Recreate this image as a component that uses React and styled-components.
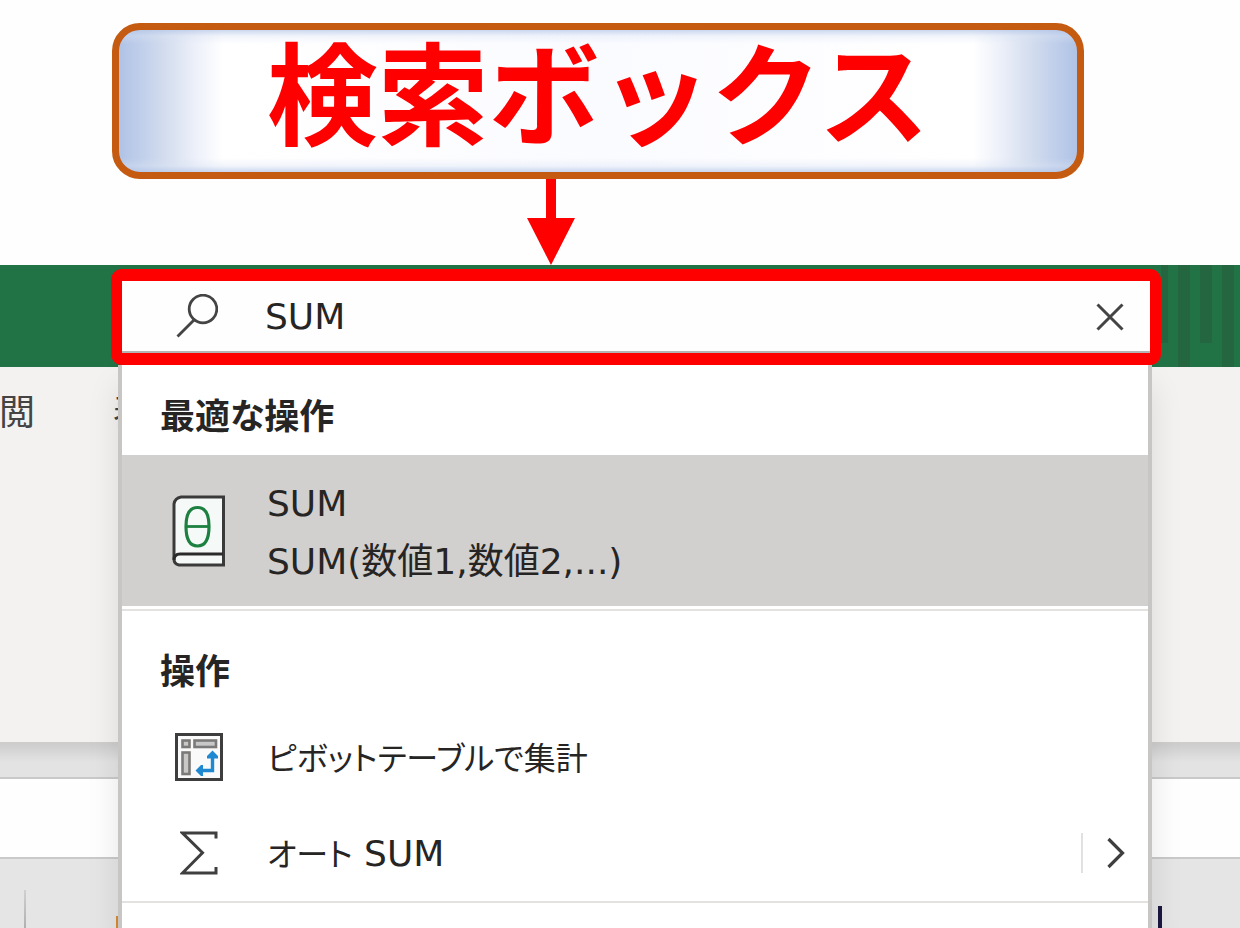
import React, { useState } from "react";
import styled, { createGlobalStyle } from "styled-components";

const GlobalStyle = createGlobalStyle`
  * { box-sizing: border-box; }
  body {
    margin: 0;
    background: #fefefe;
    color: #262524;
    font-family: "DejaVu Sans", "Noto Sans CJK JP", sans-serif;
    font-size: 36px;
    overflow: hidden;
  }
`;

const Page = styled.div`
  display: flex;
  flex-direction: column;
  min-height: 100vh;
  overflow: hidden;
`;

const Callout = styled.header`
  display: flex;
  flex-direction: column;
  align-items: center;
  padding: 23px 156px 0 112px;
`;

const Banner = styled.h1`
  margin: 0;
  width: 100%;
  height: 156px;
  border: 7px solid #c55a11;
  border-radius: 28px;
  background:
    linear-gradient(to bottom, #b4c6e7b0 0, #dae3f360 6px, #ffffff00 14px, #ffffff00 calc(100% - 14px), #dae3f360 calc(100% - 6px), #b4c6e7b0 100%),
    linear-gradient(to right, #b0c3e6 0, #c3d1eb 26px, #d3ddee 46px, #eef1fa 78px, #ffffff 104px, #fafbff 50%, #ffffff calc(100% - 104px), #eef1fa calc(100% - 78px), #d3ddee calc(100% - 46px), #c3d1eb calc(100% - 26px), #b0c3e6 100%);
  color: #ff0000;
  font-family: "Noto Sans CJK JP", sans-serif;
  font-size: 111px;
  font-weight: 700;
  line-height: 117px;
  text-align: center;
  white-space: nowrap;
`;

const Arrow = styled.svg`
  display: block;
  width: 48px;
  height: 86px;
  margin-right: 95px;
`;

const TitleBar = styled.div`
  display: flex;
  height: 102px;
  padding: 4px 0 2px 111px;
  background: #217346;
`;

const SearchBox = styled.form`
  flex: 1;
  display: flex;
  align-items: center;
  padding: 0 20px 0 54px;
  border: solid #ff0000;
  border-width: 12px 11px;
  border-radius: 11px;
  background: #fefefe;
  box-shadow: inset 0 -2px 0 #b4b4b4;
`;

const SearchInput = styled.input`
  flex: 1;
  min-width: 0;
  margin-left: 47px;
  padding: 0;
  border: 0;
  outline: 0;
  background: transparent;
  color: inherit;
  font: inherit;
  line-height: 48px;
`;

const IconButton = styled.button`
  display: grid;
  place-items: center;
  width: 40px;
  height: 40px;
  padding: 0;
  border: 0;
  background: transparent;
`;

const Stripes = styled.div`
  display: flex;
  gap: 10px;
  width: 79px;
  margin: -4px 0 -2px;
  overflow: hidden;
`;

const Stripe = styled.span`
  flex: none;
  width: ${(p) => (p.$cut ? 7 : 12)}px;
  height: ${(p) => (p.$short ? "78px" : "100%")};
  background: #246640;
`;

const Workbook = styled.main`
  flex: 1;
  display: grid;
  grid-template-columns: minmax(0, 1fr);
`;

const Backdrop = styled.div`
  grid-area: 1 / 1;
  display: flex;
  flex-direction: column;
  background: #e5e5e5;
`;

const Ribbon = styled.nav`
  display: flex;
  align-items: flex-start;
  gap: 79px;
  height: 377px;
  padding-top: 20px;
  background: #f3f2f1;
  color: #444444;
  line-height: 52px;
  border-bottom: 2px solid #cfcdcc;
`;

const Tab = styled.a`
  margin-left: -1px;
  color: inherit;
  text-decoration: none;
  white-space: nowrap;
`;

const RibbonShadow = styled.div`
  height: 33px;
  background: linear-gradient(#cdcdcd, #e3e3e3 18px);
`;

const FormulaBar = styled.div`
  height: 82px;
  border: solid #c9c9c9;
  border-width: 2px 0;
  background: #fefefe;
`;

const ColumnHeads = styled.div`
  flex: 1;
  display: flex;
  align-items: flex-end;
  padding: 0 78px 0 24px;
`;

const HeadDivider = styled.span`
  width: 2px;
  height: 38px;
  background: linear-gradient(#d0d0d0, #b0b0b0);
`;

const HeadMark = styled.span`
  width: 3px;
  height: 12px;
  margin-left: 90px;
  background: #d98a35;
`;

const CellEdge = styled.span`
  width: 4px;
  height: 22px;
  margin-left: auto;
  background: #1b1740;
`;

const Menu = styled.section`
  grid-area: 1 / 1;
  z-index: 1;
  margin: -2px 88px 0 118px;
  border: solid #c8c6c4;
  border-width: 0 4px;
  background: #ffffff;
  box-shadow: 0 20px 30px #0000001a;
`;

const GroupTitle = styled.h2`
  height: ${(p) => (p.$tall ? 98 : 90)}px;
  margin: 0;
  padding: ${(p) => (p.$tall ? 32 : 23)}px 38px 0;
  font-family: "Noto Sans CJK JP", sans-serif;
  font-size: 35px;
  font-weight: 700;
  line-height: 52px;
  font-feature-settings: "palt";
`;

const MenuItem = styled.button`
  display: flex;
  align-items: center;
  width: 100%;
  height: ${(p) => (p.$selected ? 151 : 96)}px;
  padding: 0 0 0 49px;
  border: 0;
  background: ${(p) => (p.$selected ? "#d2d0ce" : "transparent")};
  color: inherit;
  font: inherit;
  text-align: left;
`;

const IconSlot = styled.span`
  display: grid;
  place-items: center;
  width: 56px;
  margin-right: 40px;
`;

const ItemText = styled.span`
  padding-top: ${(p) => (p.$lines ? 4 : 0)}px;
  line-height: 58px;
  white-space: nowrap;
`;

const Kana = styled.span`
  font-family: "Noto Sans CJK JP", sans-serif;
  font-size: 32px;
  font-feature-settings: "palt";
`;

const Split = styled.span`
  display: flex;
  align-items: center;
  height: 40px;
  margin-left: auto;
  padding: 0 23px 0 24px;
  border-left: 2px solid #e1e1e1;
`;

const Rule = styled.hr`
  margin: ${(p) => p.$gap}px 0 0;
  border: 0;
  border-top: 2px solid #e3e2e1;
`;

const SearchIcon = () => (
  <svg width="42" height="46" viewBox="0 0 42 46" fill="none" stroke="#444" strokeWidth="2.8">
    <circle cx="27" cy="15" r="13.8" />
    <path d="M18 26 1.5 42.5" />
  </svg>
);

const CloseIcon = () => (
  <svg width="28" height="28" viewBox="0 0 28 28" fill="none" stroke="#444" strokeWidth="3">
    <path d="M1.5 1.5 26.5 26.5M26.5 1.5 1.5 26.5" />
  </svg>
);

const BookIcon = () => (
  <svg width="54" height="72" viewBox="0 0 54 72" fill="none">
    <path d="M9 2H51.500V70H7Q2 69 2 64V9Q3 3 9 2Z" fill="#f5faf9" stroke="#3a3a3a" strokeWidth="3" />
    <path d="M2 65Q2 59 8 59H51" stroke="#2b2b2b" strokeWidth="3" />
    <path
      d="M25.500 12.500C33.500 12.500 37 19 37 31.500S33.500 51 25.500 51 14 44 14 31.500 17.500 12.500 25.500 12.500Z"
      stroke="#1e8040"
      strokeWidth="3.200"
    />
    <path d="M14 31.500H37" stroke="#1e8040" strokeWidth="2.800" />
  </svg>
);

const PivotIcon = () => (
  <svg width="48" height="48" viewBox="0 0 48 48" fill="none">
    <rect x="1.500" y="1.500" width="45" height="45" fill="#fafafa" stroke="#3d3d3d" strokeWidth="3" />
    <g fill="#c8c8c8" stroke="#7c7a78" strokeWidth="2.600">
      <rect x="7.500" y="7.500" width="7" height="6.500" />
      <rect x="19.500" y="7.500" width="21.500" height="6.500" />
      <rect x="7.500" y="19.500" width="7" height="21.500" />
    </g>
    <path d="M37.500 24V37.500H26" stroke="#1e88d0" strokeWidth="3.400" />
    <path d="M37.500 17.500 43 23V25.500H32V23ZM20.500 37.500 26 32H28V43H26Z" fill="#1e88d0" />
  </svg>
);

const SigmaIcon = () => (
  <svg width="38" height="44" viewBox="0 0 38 44" fill="none" stroke="#3f3f3f" strokeWidth="3">
    <path d="M36 7.500V2H2.500L22.500 21.800 2.500 42H36V36" />
  </svg>
);

const ChevronIcon = () => (
  <svg width="18" height="32" viewBox="0 0 18 32" fill="none" stroke="#3f3f3f" strokeWidth="3.200">
    <path d="M1.500 2 15.500 16 1.500 30" />
  </svg>
);

export default function App() {
  const [query, setQuery] = useState("SUM");
  return (
    <Page>
      <GlobalStyle />
      <Callout>
        <Banner>検索ボックス</Banner>
        <Arrow viewBox="0 0 48 86" aria-hidden="true">
          <path d="M19 0H29V39H48L24 86 0 39H19Z" fill="#ff0000" />
        </Arrow>
      </Callout>
      <TitleBar>
        <SearchBox role="search" onSubmit={(e) => e.preventDefault()}>
          <SearchIcon />
          <SearchInput aria-label="検索" value={query} onChange={(e) => setQuery(e.target.value)} />
          <IconButton type="button" aria-label="クリア" onClick={() => setQuery("")}>
            <CloseIcon />
          </IconButton>
        </SearchBox>
        <Stripes>
          <Stripe $cut $short />
          <Stripe />
          <Stripe $short />
          <Stripe />
        </Stripes>
      </TitleBar>
      <Workbook>
        <Backdrop>
          <Ribbon>
            <Tab href="#review">閲</Tab>
            <Tab href="#view">表</Tab>
          </Ribbon>
          <RibbonShadow />
          <FormulaBar />
          <ColumnHeads>
            <HeadDivider />
            <HeadMark />
            <CellEdge />
          </ColumnHeads>
        </Backdrop>
        <Menu>
          <GroupTitle>最適な操作</GroupTitle>
          <MenuItem type="button" $selected>
            <IconSlot><BookIcon /></IconSlot>
            <ItemText $lines>SUM<br />SUM(数値1,数値2,...)</ItemText>
          </MenuItem>
          <Rule $gap={3} />
          <GroupTitle $tall>操作</GroupTitle>
          <MenuItem type="button">
            <IconSlot><PivotIcon /></IconSlot>
            <ItemText><Kana>ピボットテーブルで集計</Kana></ItemText>
          </MenuItem>
          <MenuItem type="button">
            <IconSlot><SigmaIcon /></IconSlot>
            <ItemText><Kana>オート</Kana> SUM</ItemText>
            <Split><ChevronIcon /></Split>
          </MenuItem>
          <Rule $gap={0} />
        </Menu>
      </Workbook>
    </Page>
  );
}
